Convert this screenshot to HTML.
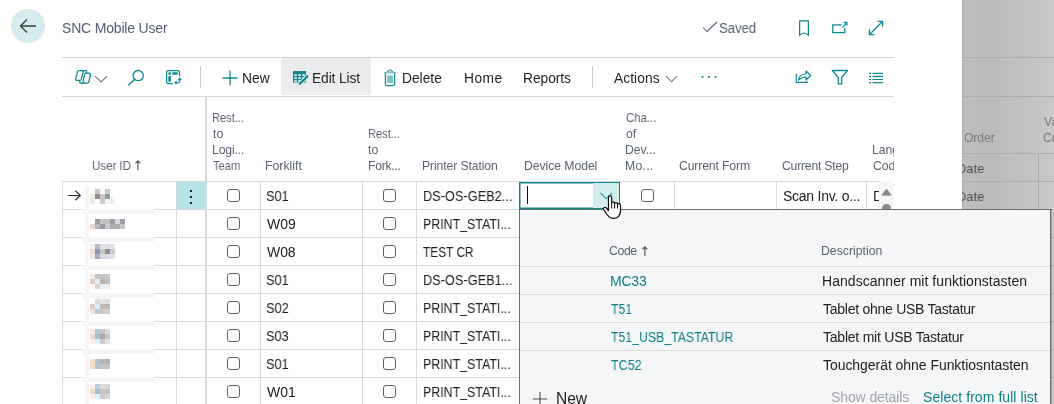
<!DOCTYPE html>
<html><head><meta charset="utf-8"><style>
html,body{margin:0;padding:0;}
body{width:1054px;height:404px;overflow:hidden;position:relative;background:#fff;font-family:"Liberation Sans",sans-serif;}
.t{position:absolute;white-space:nowrap;line-height:1;will-change:transform;}
.r{position:absolute;}
.cb{position:absolute;width:13px;height:13px;box-sizing:border-box;border:1px solid #606060;border-radius:3px;background:#fff;}
.blur{position:absolute;height:13px;background:linear-gradient(90deg,#ebe3dc 0 4px,#9ea3ab 4px 9px,#c9ccd0 9px 14px,#a5a9b0 14px 19px,#d8dbdf 19px);filter:blur(0.6px);opacity:.85}
.clipg{position:absolute;left:962px;top:0;width:76px;height:404px;overflow:hidden;}
.clipg .t{margin-left:-962px}
.clipl{position:absolute;left:0;top:0;width:894px;height:404px;overflow:hidden;}
.clipd{position:absolute;left:0;top:0;width:879px;height:404px;overflow:hidden;}
</style></head><body>
<div class="r" style="left:962px;top:0px;width:92px;height:404px;background:linear-gradient(90deg,#bebebe 0%,#bababa 30%,#c9c9c9 100%);"></div>
<div class="r" style="left:962px;top:0px;width:1px;height:404px;background:#b0b0b0;"></div>
<div class="r" style="left:962px;top:57px;width:92px;height:1px;background:#adadad;"></div>
<div class="r" style="left:962px;top:96px;width:92px;height:1px;background:#adadad;"></div>
<div class="r" style="left:962px;top:153px;width:92px;height:1px;background:#adadad;"></div>
<div class="r" style="left:962px;top:181px;width:92px;height:1px;background:#adadad;"></div>
<div class="r" style="left:962px;top:209px;width:92px;height:1px;background:#adadad;"></div>
<div class="r" style="left:962px;top:237px;width:92px;height:1px;background:#adadad;"></div>
<div class="r" style="left:962px;top:265px;width:92px;height:1px;background:#adadad;"></div>
<div class="r" style="left:962px;top:293px;width:92px;height:1px;background:#adadad;"></div>
<div class="r" style="left:962px;top:321px;width:92px;height:1px;background:#adadad;"></div>
<div class="r" style="left:962px;top:349px;width:92px;height:1px;background:#adadad;"></div>
<div class="r" style="left:962px;top:377px;width:92px;height:1px;background:#adadad;"></div>
<div class="r" style="left:1038px;top:153px;width:1px;height:251px;background:#adadad;"></div>
<div class="t" style="left:964.45px;top:131.90px;font-size:12.2px;color:#7c7c7c;letter-spacing:-0.110px;">Order</div>
<div class="t" style="left:1043.94px;top:115.90px;font-size:12.2px;color:#7c7c7c;">Va</div>
<div class="t" style="left:1043.39px;top:131.90px;font-size:12.2px;color:#7c7c7c;">Cr</div>
<div class="clipg"><div class="t" style="left:956.97px;top:161.70px;font-size:13.6px;color:#4f4f4f;transform:scaleX(0.9446);transform-origin:0 0;">Date</div>
<div class="t" style="left:956.97px;top:189.70px;font-size:13.6px;color:#4f4f4f;transform:scaleX(0.9446);transform-origin:0 0;">Date</div>
</div><div class="r" style="left:11px;top:9px;width:34px;height:34px;border-radius:50%;background:#d6ecef"></div><svg class="r" style="left:18px;top:17px" width="20" height="18" viewBox="0 0 20 18"><path d="M2.5 9H18M9 2.5L2.5 9L9 15.5" fill="none" stroke="#3c3c3c" stroke-width="1.3"/></svg><div class="t" style="left:61.67px;top:21.00px;font-size:14px;color:#535d6e;letter-spacing:-0.181px;">SNC Mobile User</div>
<svg class="r" style="left:702px;top:21px" width="16" height="12" viewBox="0 0 16 12"><path d="M1 6.5L5 10.5L15 1" fill="none" stroke="#596273" stroke-width="1.05"/></svg><div class="t" style="left:719.11px;top:21.60px;font-size:13.8px;color:#535d6e;transform:scaleX(0.9467);transform-origin:0 0;">Saved</div>
<svg class="r" style="left:798px;top:20px" width="12" height="17" viewBox="0 0 12 17"><path d="M1.6 15.4V0.9H10.4V15.4C9 14 8 13 6 13C4 13 3 14 1.6 15.4Z" fill="none" stroke="#0e8a8f" stroke-width="1.2" stroke-linejoin="miter"/></svg><svg class="r" style="left:831px;top:20px" width="18" height="14" viewBox="0 0 18 14"><path d="M10.7 4.8H1.8V12.5H13.8V7.8" fill="none" stroke="#0e8a8f" stroke-width="1.25"/><path d="M11.2 7.6L15.6 3.2" stroke="#0e8a8f" stroke-width="1.2"/><path d="M12.7 2.5H15.8V5.6" fill="none" stroke="#0e8a8f" stroke-width="1.3"/></svg><svg class="r" style="left:868px;top:20px" width="16" height="16" viewBox="0 0 16 16"><path d="M1.6 14.4L14.4 1.6M9.6 1.4H14.6V6.4M1.4 9.6V14.6H6.4" fill="none" stroke="#0e8a8f" stroke-width="1.35"/></svg><div class="r" style="left:62px;top:57px;width:832px;height:1px;background:#d2d5da;"></div>
<div class="r" style="left:62px;top:96px;width:832px;height:1px;background:#d2d5da;"></div>
<div class="r" style="left:281px;top:58px;width:90px;height:37px;background:#ebecee;border-radius:2px"></div>
<div class="r" style="left:200px;top:66px;width:1px;height:22px;background:#c9c9c9;"></div>
<div class="r" style="left:592px;top:66px;width:1px;height:22px;background:#c9c9c9;"></div>
<svg class="r" style="left:73px;top:67px" width="20" height="20" viewBox="0 0 20 20"><g fill="none" stroke="#0e8a8f" stroke-width="1.25" stroke-linejoin="round"><path d="M5.8 3.5H9.4C10.1 3.5 10.4 4 10.2 4.7L8.3 12.4C8.1 13 7.7 13.4 7 13.4H3.8C3 13.4 2.5 12.8 2.7 12L4.5 4.6C4.7 3.9 5.1 3.5 5.8 3.5Z"/><path d="M13 6.2H16.3C17.1 6.2 17.6 6.8 17.4 7.6L15.9 14.8C15.7 15.6 15.2 16.1 14.5 16.1H11C10.2 16.1 9.8 15.5 10 14.7L11.7 7.2C11.9 6.6 12.3 6.2 13 6.2Z"/><path d="M9.4 3.5H12.6C13.4 3.5 13.8 4.1 13.6 4.8L13.3 6.2"/><path d="M7 13.4L6.7 14.8C6.5 15.6 6.9 16.1 7.6 16.1H11"/></g></svg><svg class="r" style="left:94px;top:75px" width="14" height="8" viewBox="0 0 14 8"><path d="M1 1.2L7 7L13 1.2" fill="none" stroke="#777" stroke-width="1.1"/></svg><svg class="r" style="left:127px;top:69px" width="18" height="18" viewBox="0 0 18 18"><circle cx="11.2" cy="6.6" r="5.1" fill="none" stroke="#0e8a8f" stroke-width="1.3"/><path d="M7.6 10.2L1.2 16.6" stroke="#0e8a8f" stroke-width="1.4"/></svg><svg class="r" style="left:165px;top:69px" width="18" height="17" viewBox="0 0 18 17"><path d="M8 14.6H3.4C2.2 14.6 1.6 13.9 1.6 12.7V3.2C1.6 2 2.2 1.5 3.4 1.5H12.7C13.9 1.5 14.5 2 14.5 3.2V7.6" fill="none" stroke="#0e8a8f" stroke-width="1.25"/><rect x="3.3" y="3.2" width="2.6" height="2.5" rx="0.7" fill="#0e8a8f"/><rect x="7.2" y="3.2" width="5.6" height="2.5" rx="0.7" fill="#0e8a8f"/><rect x="3.3" y="7.1" width="2.6" height="5.6" rx="0.7" fill="#0e8a8f"/><path d="M10.5 13.7H13.3C14.2 13.7 14.8 13.1 14.8 12.2V9.8M13.3 11L14.8 9.4L16.3 11M11.6 12.3L10 13.7L11.6 15.1" fill="none" stroke="#0e8a8f" stroke-width="1.15"/></svg><svg class="r" style="left:222px;top:70px" width="16" height="16" viewBox="0 0 16 16"><path d="M8 0.5V15.5M0.5 8H15.5" stroke="#0e8a8f" stroke-width="1.3"/></svg><div class="t" style="left:241.50px;top:71.60px;font-size:13.8px;color:#262626;letter-spacing:0.068px;">New</div>
<svg class="r" style="left:292px;top:70px" width="18" height="17" viewBox="0 0 18 17"><rect x="1" y="1" width="13.1" height="11.6" fill="#0e8a8f"/><rect x="2.2" y="4.3" width="2.7" height="1.5" rx="0.4" fill="#fff"/><rect x="6.1" y="4.3" width="2.7" height="1.5" rx="0.4" fill="#fff"/><rect x="10.2" y="4.3" width="2.7" height="1.5" rx="0.4" fill="#fff"/><rect x="2.2" y="7.3" width="2.7" height="1.5" rx="0.4" fill="#fff"/><rect x="6.1" y="7.3" width="2.7" height="1.5" rx="0.4" fill="#fff"/><rect x="10.2" y="7.3" width="2.7" height="1.5" rx="0.4" fill="#fff"/><rect x="2.2" y="10.2" width="2.7" height="1.5" rx="0.4" fill="#fff"/><rect x="6.1" y="10.2" width="2.7" height="1.5" rx="0.4" fill="#fff"/><rect x="10.2" y="10.2" width="2.7" height="1.5" rx="0.4" fill="#fff"/><path d="M7 14.6L15.4 6.2" stroke="#ebecee" stroke-width="4" stroke-linecap="round"/><path d="M8.4 13.2L15.4 6.2" stroke="#0e8a8f" stroke-width="2.3" stroke-linecap="round"/><path d="M6.4 15.1L7.3 12.4L9.1 14.2Z" fill="#0e8a8f"/></svg><div class="t" style="left:311.50px;top:71.60px;font-size:13.8px;color:#262626;letter-spacing:-0.123px;">Edit List</div>
<svg class="r" style="left:383px;top:69px" width="14" height="18" viewBox="0 0 14 18"><path d="M4.2 3.4C4.2 1.9 5.2 1.1 7 1.1C8.8 1.1 9.8 1.9 9.8 3.4Z" fill="#8cc5c8" stroke="#0e8a8f" stroke-width="0.9"/><path d="M6.4 1.6H7.6V3.2H6.4Z" fill="#fff"/><rect x="1" y="3" width="12" height="1.4" fill="#7dbdc0"/><path d="M2.4 4.2V14.8C2.4 15.9 3.1 16.6 4.1 16.6H9.9C10.9 16.6 11.6 15.9 11.6 14.8V4.2" fill="none" stroke="#0e8a8f" stroke-width="1.3"/><rect x="4.1" y="6.5" width="5.8" height="7.5" fill="#80c1c4"/></svg><div class="t" style="left:401.80px;top:71.60px;font-size:13.8px;color:#262626;letter-spacing:-0.011px;">Delete</div>
<div class="t" style="left:463.50px;top:71.60px;font-size:13.8px;color:#262626;letter-spacing:0.416px;">Home</div>
<div class="t" style="left:522.70px;top:71.60px;font-size:13.8px;color:#262626;letter-spacing:-0.052px;">Reports</div>
<div class="t" style="left:613.90px;top:71.60px;font-size:13.8px;color:#262626;letter-spacing:0.053px;">Actions</div>
<svg class="r" style="left:665px;top:75px" width="13" height="8" viewBox="0 0 13 8"><path d="M1 1.2L6.5 6.8L12 1.2" fill="none" stroke="#777" stroke-width="1.1"/></svg><svg class="r" style="left:700px;top:75px" width="18" height="4" viewBox="0 0 18 4"><circle cx="2.5" cy="2" r="1.1" fill="#0e8a8f"/><circle cx="9" cy="2" r="1.1" fill="#0e8a8f"/><circle cx="15.5" cy="2" r="1.1" fill="#0e8a8f"/></svg><svg class="r" style="left:795px;top:69px" width="17" height="15" viewBox="0 0 17 15"><path d="M1.3 5V13.3H12V12" fill="none" stroke="#0e8a8f" stroke-width="1.2"/><path d="M3.5 11C4 7 6.5 5 11 5V2L15.8 6.5L11 11V8C7.5 8 5.5 9 3.5 11Z" fill="none" stroke="#0e8a8f" stroke-width="1.2" stroke-linejoin="round"/></svg><svg class="r" style="left:831px;top:69px" width="18" height="16" viewBox="0 0 18 16"><path d="M1.3 1.5H16.5L10.6 8.5V14.8H7.4V8.5Z" fill="none" stroke="#0e8a8f" stroke-width="1.3" stroke-linejoin="round"/></svg><svg class="r" style="left:868px;top:72px" width="16" height="12" viewBox="0 0 16 12"><path d="M1 1.3H3M4.5 1.3H15M1 4.4H3M4.5 4.4H15M1 7.5H3M4.5 7.5H15M1 10.6H3M4.5 10.6H15" stroke="#0e8a8f" stroke-width="1.2"/></svg><div class="t" style="left:91.74px;top:159.90px;font-size:12.2px;color:#5b6270;transform:scaleX(0.9439);transform-origin:0 0;">User ID</div>
<svg class="r" style="left:134.5px;top:160px" width="6" height="11" viewBox="0 0 6 11"><path d="M2.9 10V0.9M0.5 3.4L2.9 0.9L5.3 3.4" fill="none" stroke="#555" stroke-width="1.15"/></svg><div class="t" style="left:211.92px;top:111.90px;font-size:12.2px;color:#5b6270;transform:scaleX(0.9057);transform-origin:0 0;">Rest...</div>
<div class="t" style="left:212.62px;top:127.90px;font-size:12.2px;color:#5b6270;">to</div>
<div class="t" style="left:211.82px;top:143.90px;font-size:12.2px;color:#5b6270;letter-spacing:-0.135px;">Logi...</div>
<div class="t" style="left:212.58px;top:159.90px;font-size:12.2px;color:#5b6270;transform:scaleX(0.9134);transform-origin:0 0;">Team</div>
<div class="t" style="left:265.42px;top:159.90px;font-size:12.2px;color:#5b6270;letter-spacing:0.043px;">Forklift</div>
<div class="t" style="left:367.62px;top:127.90px;font-size:12.2px;color:#5b6270;transform:scaleX(0.9057);transform-origin:0 0;">Rest...</div>
<div class="t" style="left:368.32px;top:143.90px;font-size:12.2px;color:#5b6270;">to</div>
<div class="t" style="left:367.52px;top:159.90px;font-size:12.2px;color:#5b6270;letter-spacing:-0.259px;">Fork...</div>
<div class="t" style="left:421.72px;top:159.90px;font-size:12.2px;color:#5b6270;letter-spacing:-0.101px;">Printer Station</div>
<div class="t" style="left:523.62px;top:159.90px;font-size:12.2px;color:#5b6270;letter-spacing:-0.046px;">Device Model</div>
<div class="t" style="left:625.73px;top:111.90px;font-size:12.2px;color:#5b6270;transform:scaleX(0.9317);transform-origin:0 0;">Cha...</div>
<div class="t" style="left:625.81px;top:127.90px;font-size:12.2px;color:#5b6270;">of</div>
<div class="t" style="left:625.32px;top:143.90px;font-size:12.2px;color:#5b6270;letter-spacing:-0.031px;">Dev...</div>
<div class="t" style="left:625.32px;top:159.90px;font-size:12.2px;color:#5b6270;letter-spacing:0.273px;">Mo...</div>
<div class="t" style="left:679.29px;top:159.90px;font-size:12.2px;color:#5b6270;letter-spacing:-0.126px;">Current Form</div>
<div class="t" style="left:781.69px;top:159.90px;font-size:12.2px;color:#5b6270;letter-spacing:-0.216px;">Current Step</div>
<div class="clipl"><div class="t" style="left:872.22px;top:143.90px;font-size:12.2px;color:#5b6270;">Lang</div>
<div class="t" style="left:872.59px;top:159.90px;font-size:12.2px;color:#5b6270;">Code</div>
</div><div class="r" style="left:62px;top:181px;width:817px;height:1px;background:#d7dade;"></div>
<div class="r" style="left:62px;top:209px;width:457px;height:1px;background:#d7dade;"></div>
<div class="r" style="left:62px;top:237px;width:457px;height:1px;background:#d7dade;"></div>
<div class="r" style="left:62px;top:265px;width:457px;height:1px;background:#d7dade;"></div>
<div class="r" style="left:62px;top:293px;width:457px;height:1px;background:#d7dade;"></div>
<div class="r" style="left:62px;top:321px;width:457px;height:1px;background:#d7dade;"></div>
<div class="r" style="left:62px;top:349px;width:457px;height:1px;background:#d7dade;"></div>
<div class="r" style="left:62px;top:377px;width:457px;height:1px;background:#d7dade;"></div>
<div class="r" style="left:62px;top:182px;width:1px;height:222px;background:#d7dade;"></div>
<div class="r" style="left:176px;top:182px;width:1px;height:222px;background:#d7dade;"></div>
<div class="r" style="left:260px;top:182px;width:1px;height:222px;background:#d7dade;"></div>
<div class="r" style="left:362px;top:182px;width:1px;height:222px;background:#d7dade;"></div>
<div class="r" style="left:416px;top:182px;width:1px;height:222px;background:#d7dade;"></div>
<div class="r" style="left:674px;top:182px;width:1px;height:27px;background:#d7dade;"></div>
<div class="r" style="left:776px;top:182px;width:1px;height:27px;background:#d7dade;"></div>
<div class="r" style="left:866px;top:182px;width:1px;height:27px;background:#d7dade;"></div>
<div class="r" style="left:205px;top:96px;width:2px;height:308px;background:#d5d8dc;"></div>
<div class="r" style="left:177px;top:182px;width:28px;height:27px;background:#b2e4e8;"></div>
<div class="r" style="left:190px;top:190px;width:2px;height:2px;background:#1a1a2a;"></div>
<div class="r" style="left:190px;top:196px;width:2px;height:2px;background:#1a1a2a;"></div>
<div class="r" style="left:190px;top:202px;width:2px;height:2px;background:#1a1a2a;"></div>
<svg class="r" style="left:66px;top:189px" width="16" height="14" viewBox="0 0 16 14"><path d="M2 6.5H14.3M9.4 1.7L14.3 6.5L9.4 11.3" fill="none" stroke="#333" stroke-width="1.2"/></svg><div class="cb" style="left:227px;top:189px"></div><div class="cb" style="left:383px;top:189px"></div><div class="t" style="left:266.42px;top:189.00px;font-size:14px;color:#212121;transform:scaleX(0.9172);transform-origin:0 0;">S01</div>
<div class="t" style="left:423.08px;top:189.00px;font-size:14px;color:#212121;transform:scaleX(0.9119);transform-origin:0 0;">DS-OS-GEB2...</div>
<div class="cb" style="left:227px;top:217px"></div><div class="cb" style="left:383px;top:217px"></div><div class="t" style="left:266.93px;top:217.00px;font-size:14px;color:#212121;letter-spacing:-0.035px;">W09</div>
<div class="t" style="left:423.11px;top:217.00px;font-size:14px;color:#212121;transform:scaleX(0.8851);transform-origin:0 0;">PRINT_STATI...</div>
<div class="cb" style="left:227px;top:245px"></div><div class="cb" style="left:383px;top:245px"></div><div class="t" style="left:266.93px;top:245.00px;font-size:14px;color:#212121;letter-spacing:-0.070px;">W08</div>
<div class="t" style="left:422.96px;top:245.00px;font-size:14px;color:#212121;transform:scaleX(0.8479);transform-origin:0 0;">TEST CR</div>
<div class="cb" style="left:227px;top:273px"></div><div class="cb" style="left:383px;top:273px"></div><div class="t" style="left:266.42px;top:273.00px;font-size:14px;color:#212121;transform:scaleX(0.9172);transform-origin:0 0;">S01</div>
<div class="t" style="left:423.08px;top:273.00px;font-size:14px;color:#212121;transform:scaleX(0.9119);transform-origin:0 0;">DS-OS-GEB1...</div>
<div class="cb" style="left:227px;top:301px"></div><div class="cb" style="left:383px;top:301px"></div><div class="t" style="left:266.42px;top:301.00px;font-size:14px;color:#212121;transform:scaleX(0.9199);transform-origin:0 0;">S02</div>
<div class="t" style="left:423.11px;top:301.00px;font-size:14px;color:#212121;transform:scaleX(0.8851);transform-origin:0 0;">PRINT_STATI...</div>
<div class="cb" style="left:227px;top:329px"></div><div class="cb" style="left:383px;top:329px"></div><div class="t" style="left:266.42px;top:329.00px;font-size:14px;color:#212121;transform:scaleX(0.9145);transform-origin:0 0;">S03</div>
<div class="t" style="left:423.11px;top:329.00px;font-size:14px;color:#212121;transform:scaleX(0.8851);transform-origin:0 0;">PRINT_STATI...</div>
<div class="cb" style="left:227px;top:357px"></div><div class="cb" style="left:383px;top:357px"></div><div class="t" style="left:266.42px;top:357.00px;font-size:14px;color:#212121;transform:scaleX(0.9172);transform-origin:0 0;">S01</div>
<div class="t" style="left:423.11px;top:357.00px;font-size:14px;color:#212121;transform:scaleX(0.8851);transform-origin:0 0;">PRINT_STATI...</div>
<div class="cb" style="left:227px;top:385px"></div><div class="cb" style="left:383px;top:385px"></div><div class="t" style="left:266.93px;top:385.00px;font-size:14px;color:#212121;letter-spacing:-0.035px;">W01</div>
<div class="t" style="left:423.11px;top:385.00px;font-size:14px;color:#212121;transform:scaleX(0.8851);transform-origin:0 0;">PRINT_STATI...</div>
<div class="r" style="left:85px;top:186px;width:4px;height:218px;background:#f5f5f6;"></div>
<div class="r" style="left:82px;top:209px;width:72px;height:5px;background:#f5f5f6;"></div>
<div class="r" style="left:82px;top:237px;width:72px;height:5px;background:#f5f5f6;"></div>
<div class="r" style="left:82px;top:265px;width:72px;height:5px;background:#f5f5f6;"></div>
<div class="r" style="left:82px;top:293px;width:72px;height:5px;background:#f5f5f6;"></div>
<div class="r" style="left:82px;top:321px;width:72px;height:5px;background:#f5f5f6;"></div>
<div class="r" style="left:82px;top:349px;width:72px;height:5px;background:#f5f5f6;"></div>
<div class="r" style="left:82px;top:377px;width:72px;height:5px;background:#f5f5f6;"></div>
<svg class="r" style="left:90px;top:189px;filter:blur(0.4px)" width="25" height="15" viewBox="0 0 25 15" shape-rendering="crispEdges"><rect x="5" y="0" width="5" height="5" fill="#c8c8cc"/><rect x="10" y="0" width="5" height="5" fill="#fdfbf5"/><rect x="15" y="0" width="5" height="5" fill="#c8c9cc"/><rect x="0" y="5" width="5" height="5" fill="#f3ece2"/><rect x="5" y="5" width="5" height="5" fill="#8f8f93"/><rect x="10" y="5" width="5" height="5" fill="#cdc8c4"/><rect x="15" y="5" width="5" height="5" fill="#8e9aa5"/><rect x="20" y="5" width="5" height="5" fill="#f5fafd"/><rect x="0" y="10" width="5" height="5" fill="#ebeaea"/><rect x="5" y="10" width="5" height="5" fill="#fafcfd"/><rect x="10" y="10" width="5" height="5" fill="#c9c9cb"/><rect x="15" y="10" width="5" height="5" fill="#f7f1ea"/><rect x="20" y="10" width="5" height="5" fill="#e8f0f8"/></svg><svg class="r" style="left:90px;top:219px;filter:blur(0.4px)" width="35" height="10" viewBox="0 0 35 10" shape-rendering="crispEdges"><rect x="5" y="0" width="5" height="5" fill="#9b9b9f"/><rect x="10" y="0" width="5" height="5" fill="#c6c3c0"/><rect x="15" y="0" width="5" height="5" fill="#c5c2be"/><rect x="20" y="0" width="5" height="5" fill="#9e9ea4"/><rect x="25" y="0" width="5" height="5" fill="#d7dade"/><rect x="30" y="0" width="5" height="5" fill="#9c9ea3"/><rect x="0" y="5" width="5" height="5" fill="#e8ddd3"/><rect x="5" y="5" width="5" height="5" fill="#b4b6b9"/><rect x="10" y="5" width="5" height="5" fill="#979ba3"/><rect x="15" y="5" width="5" height="5" fill="#cbc6c1"/><rect x="20" y="5" width="5" height="5" fill="#a8adb5"/><rect x="25" y="5" width="5" height="5" fill="#b3aeaa"/><rect x="30" y="5" width="5" height="5" fill="#c1c6cb"/></svg><svg class="r" style="left:90px;top:244px;filter:blur(0.4px)" width="25" height="15" viewBox="0 0 25 15" shape-rendering="crispEdges"><rect x="0" y="0" width="5" height="5" fill="#f7f0ec"/><rect x="5" y="0" width="5" height="5" fill="#b7bccb"/><rect x="10" y="0" width="5" height="5" fill="#e0e0e3"/><rect x="15" y="0" width="5" height="5" fill="#dddddf"/><rect x="20" y="0" width="5" height="5" fill="#e3e3e5"/><rect x="0" y="5" width="5" height="5" fill="#f2ddcc"/><rect x="5" y="5" width="5" height="5" fill="#8796ab"/><rect x="10" y="5" width="5" height="5" fill="#c4c9cc"/><rect x="15" y="5" width="5" height="5" fill="#8e8d91"/><rect x="20" y="5" width="5" height="5" fill="#c9cbcf"/><rect x="0" y="10" width="5" height="5" fill="#f6e9df"/><rect x="5" y="10" width="5" height="5" fill="#a7b0c2"/><rect x="10" y="10" width="5" height="5" fill="#dcdcde"/><rect x="15" y="10" width="5" height="5" fill="#dddcdc"/><rect x="20" y="10" width="5" height="5" fill="#dde5ec"/></svg><svg class="r" style="left:90px;top:274px;filter:blur(0.4px)" width="20" height="15" viewBox="0 0 20 15" shape-rendering="crispEdges"><rect x="0" y="0" width="5" height="5" fill="#f4ece6"/><rect x="5" y="0" width="5" height="5" fill="#c2c4c7"/><rect x="10" y="0" width="5" height="5" fill="#c4c5c7"/><rect x="15" y="0" width="5" height="5" fill="#c8c9ca"/><rect x="0" y="5" width="5" height="5" fill="#dccfc6"/><rect x="5" y="5" width="5" height="5" fill="#e3eef7"/><rect x="10" y="5" width="5" height="5" fill="#bdb2ad"/><rect x="15" y="5" width="5" height="5" fill="#b8c0cc"/><rect x="5" y="10" width="5" height="5" fill="#ddd5cf"/><rect x="10" y="10" width="5" height="5" fill="#eef0f3"/><rect x="15" y="10" width="5" height="5" fill="#eeeeee"/></svg><svg class="r" style="left:90px;top:299px;filter:blur(0.4px)" width="20" height="15" viewBox="0 0 20 15" shape-rendering="crispEdges"><rect x="5" y="0" width="5" height="5" fill="#ddd8d4"/><rect x="10" y="0" width="5" height="5" fill="#e6e4e4"/><rect x="15" y="0" width="5" height="5" fill="#dde0e3"/><rect x="0" y="5" width="5" height="5" fill="#dcccc6"/><rect x="5" y="5" width="5" height="5" fill="#e2eaf4"/><rect x="10" y="5" width="5" height="5" fill="#c3b9b3"/><rect x="15" y="5" width="5" height="5" fill="#b9b8bd"/><rect x="0" y="10" width="5" height="5" fill="#f0e2dc"/><rect x="5" y="10" width="5" height="5" fill="#c1c9d0"/><rect x="10" y="10" width="5" height="5" fill="#c8ccd1"/><rect x="15" y="10" width="5" height="5" fill="#d3ceca"/></svg><svg class="r" style="left:90px;top:329px;filter:blur(0.4px)" width="20" height="15" viewBox="0 0 20 15" shape-rendering="crispEdges"><rect x="0" y="0" width="5" height="5" fill="#f7ebdd"/><rect x="5" y="0" width="5" height="5" fill="#b7c5d6"/><rect x="10" y="0" width="5" height="5" fill="#c8c2bc"/><rect x="15" y="0" width="5" height="5" fill="#d8dbe2"/><rect x="0" y="5" width="5" height="5" fill="#f0dcc6"/><rect x="5" y="5" width="5" height="5" fill="#a9bcd2"/><rect x="10" y="5" width="5" height="5" fill="#b0a7a0"/><rect x="15" y="5" width="5" height="5" fill="#c2c8d0"/><rect x="0" y="10" width="5" height="5" fill="#f9efe7"/><rect x="5" y="10" width="5" height="5" fill="#e4f0fb"/><rect x="10" y="10" width="5" height="5" fill="#d0cac6"/><rect x="15" y="10" width="5" height="5" fill="#e1e5ea"/></svg><svg class="r" style="left:90px;top:359px;filter:blur(0.4px)" width="20" height="10" viewBox="0 0 20 10" shape-rendering="crispEdges"><rect x="0" y="0" width="5" height="5" fill="#f0dccb"/><rect x="5" y="0" width="5" height="5" fill="#afc3d9"/><rect x="10" y="0" width="5" height="5" fill="#bcb5ae"/><rect x="15" y="0" width="5" height="5" fill="#afb2b4"/><rect x="0" y="5" width="5" height="5" fill="#f0dccb"/><rect x="5" y="5" width="5" height="5" fill="#afc3d9"/><rect x="10" y="5" width="5" height="5" fill="#c7c5c3"/><rect x="15" y="5" width="5" height="5" fill="#c7c5c3"/></svg><svg class="r" style="left:90px;top:384px;filter:blur(0.4px)" width="20" height="15" viewBox="0 0 20 15" shape-rendering="crispEdges"><rect x="0" y="0" width="5" height="5" fill="#f8efe8"/><rect x="5" y="0" width="5" height="5" fill="#c0cdd8"/><rect x="10" y="0" width="5" height="5" fill="#e0dbd7"/><rect x="15" y="0" width="5" height="5" fill="#d2d8dd"/><rect x="0" y="5" width="5" height="5" fill="#f0ddc8"/><rect x="5" y="5" width="5" height="5" fill="#a9bdd6"/><rect x="10" y="5" width="5" height="5" fill="#c4c4c4"/><rect x="15" y="5" width="5" height="5" fill="#c2c4c6"/><rect x="0" y="10" width="5" height="5" fill="#f9efe6"/><rect x="5" y="10" width="5" height="5" fill="#e6f2fc"/><rect x="10" y="10" width="5" height="5" fill="#d2ccc8"/><rect x="15" y="10" width="5" height="5" fill="#d3d7da"/></svg><div class="cb" style="left:641px;top:189px"></div><div class="t" style="left:782.97px;top:189.00px;font-size:14px;color:#212121;letter-spacing:-0.258px;">Scan Inv. o...</div>
<div class="clipd"><div class="t" style="left:873.28px;top:189.00px;font-size:14px;color:#212121;">D</div>
</div><div class="r" style="left:879px;top:181px;width:15px;height:28px;background:#f7f7f7;"></div>
<svg class="r" style="left:881px;top:188px" width="11" height="8" viewBox="0 0 11 8"><path d="M5.5 1L10.2 7.2H0.8Z" fill="#8a8a8a" stroke="#8a8a8a" stroke-width="0.8" stroke-linejoin="round"/></svg><div class="r" style="left:879px;top:182px;width:15px;height:27px;overflow:hidden"><div class="r" style="left:3px;top:22px;width:9px;height:12px;border-radius:4.5px;background:#8a8a8a"></div></div><div class="r" style="left:519px;top:182px;width:101px;height:27px;background:#fff;box-sizing:border-box;border:1px solid #0c878b;box-shadow:inset 0 0 0 0.5px #0c878b"></div>
<div class="r" style="left:593px;top:183px;width:26px;height:25px;background:#d4edef;"></div>
<svg class="r" style="left:600px;top:192px" width="13" height="8" viewBox="0 0 13 8"><path d="M0.6 1L6.3 6.8L12 1" fill="none" stroke="#2596a0" stroke-width="1.1"/></svg><div class="r" style="left:527px;top:186px;width:1px;height:18px;background:#111;"></div>
<div class="r" style="left:519px;top:209px;width:532px;height:200px;background:#f5f6f8;box-sizing:border-box;border:1px solid #6c6c6c;border-bottom:none;box-shadow:1px 0 0 rgba(0,0,0,.18)"></div>
<div class="t" style="left:609.49px;top:244.90px;font-size:12.2px;color:#5b6270;letter-spacing:-0.333px;">Code</div>
<svg class="r" style="left:641.6px;top:245.5px" width="6" height="11" viewBox="0 0 6 11"><path d="M2.9 10V0.9M0.5 3.4L2.9 0.9L5.3 3.4" fill="none" stroke="#555" stroke-width="1.15"/></svg><div class="t" style="left:821.42px;top:244.90px;font-size:12.2px;color:#5b6270;letter-spacing:0.037px;">Description</div>
<div class="r" style="left:520px;top:266px;width:530px;height:1px;background:#d9dbde;"></div>
<div class="r" style="left:520px;top:294px;width:530px;height:1px;background:#d9dbde;"></div>
<div class="r" style="left:520px;top:322px;width:530px;height:1px;background:#d9dbde;"></div>
<div class="r" style="left:520px;top:350px;width:530px;height:1px;background:#d9dbde;"></div>
<div class="t" style="left:610.18px;top:274.00px;font-size:14px;color:#0e7f86;letter-spacing:-0.210px;">MC33</div>
<div class="t" style="left:822.28px;top:274.00px;font-size:14px;color:#222;letter-spacing:0.041px;">Handscanner mit funktionstasten</div>
<div class="t" style="left:611.05px;top:302.00px;font-size:14px;color:#0e7f86;transform:scaleX(0.8804);transform-origin:0 0;">T51</div>
<div class="t" style="left:823.12px;top:302.00px;font-size:14px;color:#222;letter-spacing:-0.260px;">Tablet ohne USB Tastatur</div>
<div class="t" style="left:611.05px;top:330.00px;font-size:14px;color:#0e7f86;transform:scaleX(0.8777);transform-origin:0 0;">T51_USB_TASTATUR</div>
<div class="t" style="left:823.12px;top:330.00px;font-size:14px;color:#222;letter-spacing:-0.230px;">Tablet mit USB Tastatur</div>
<div class="t" style="left:611.05px;top:358.00px;font-size:14px;color:#0e7f86;transform:scaleX(0.8932);transform-origin:0 0;">TC52</div>
<div class="t" style="left:823.12px;top:358.00px;font-size:14px;color:#222;letter-spacing:-0.050px;">Touchgerät ohne Funktiosntasten</div>
<svg class="r" style="left:533px;top:391px" width="15" height="15" viewBox="0 0 15 15"><path d="M7 1V15M0 8H14" stroke="#4a4a4a" stroke-width="1.1"/></svg><div class="t" style="left:555.65px;top:390.70px;font-size:15.6px;color:#222;letter-spacing:-0.065px;">New</div>
<div class="t" style="left:830.67px;top:390.00px;font-size:14px;color:#a3a6aa;letter-spacing:-0.105px;">Show details</div>
<div class="t" style="left:923.37px;top:390.00px;font-size:14px;color:#0e7f86;letter-spacing:0.058px;">Select from full list</div>
<svg class="r" style="left:601px;top:194px" width="22" height="26" viewBox="0 0 22 26"><path d="M7.5 3.6C7.5 2.6 8.2 1.9 9.1 1.9C10 1.9 10.7 2.6 10.7 3.6V9.2C10.9 8.4 11.5 7.9 12.2 7.9C13 7.9 13.5 8.5 13.6 9.2V9.8C13.8 9.1 14.4 8.7 15.1 8.7C15.9 8.7 16.5 9.3 16.5 10.1V10.6C16.7 10 17.3 9.6 17.9 9.6C18.8 9.6 19.5 10.3 19.5 11.2V16.5C19.5 21 17 24.3 13 24.3H12C9.5 24.3 7.8 23 6.4 21L2.8 15.8C2.3 15 2.5 14 3.2 13.6C4 13.1 4.9 13.4 5.5 14.1L7.5 16.5Z" fill="#fff" stroke="#111" stroke-width="1.2" stroke-linejoin="round"/><path d="M10.7 9.2V14.5M13.6 9.8V14.5M16.5 10.6V14.5" stroke="#111" stroke-width="1"/></svg>
</body></html>
